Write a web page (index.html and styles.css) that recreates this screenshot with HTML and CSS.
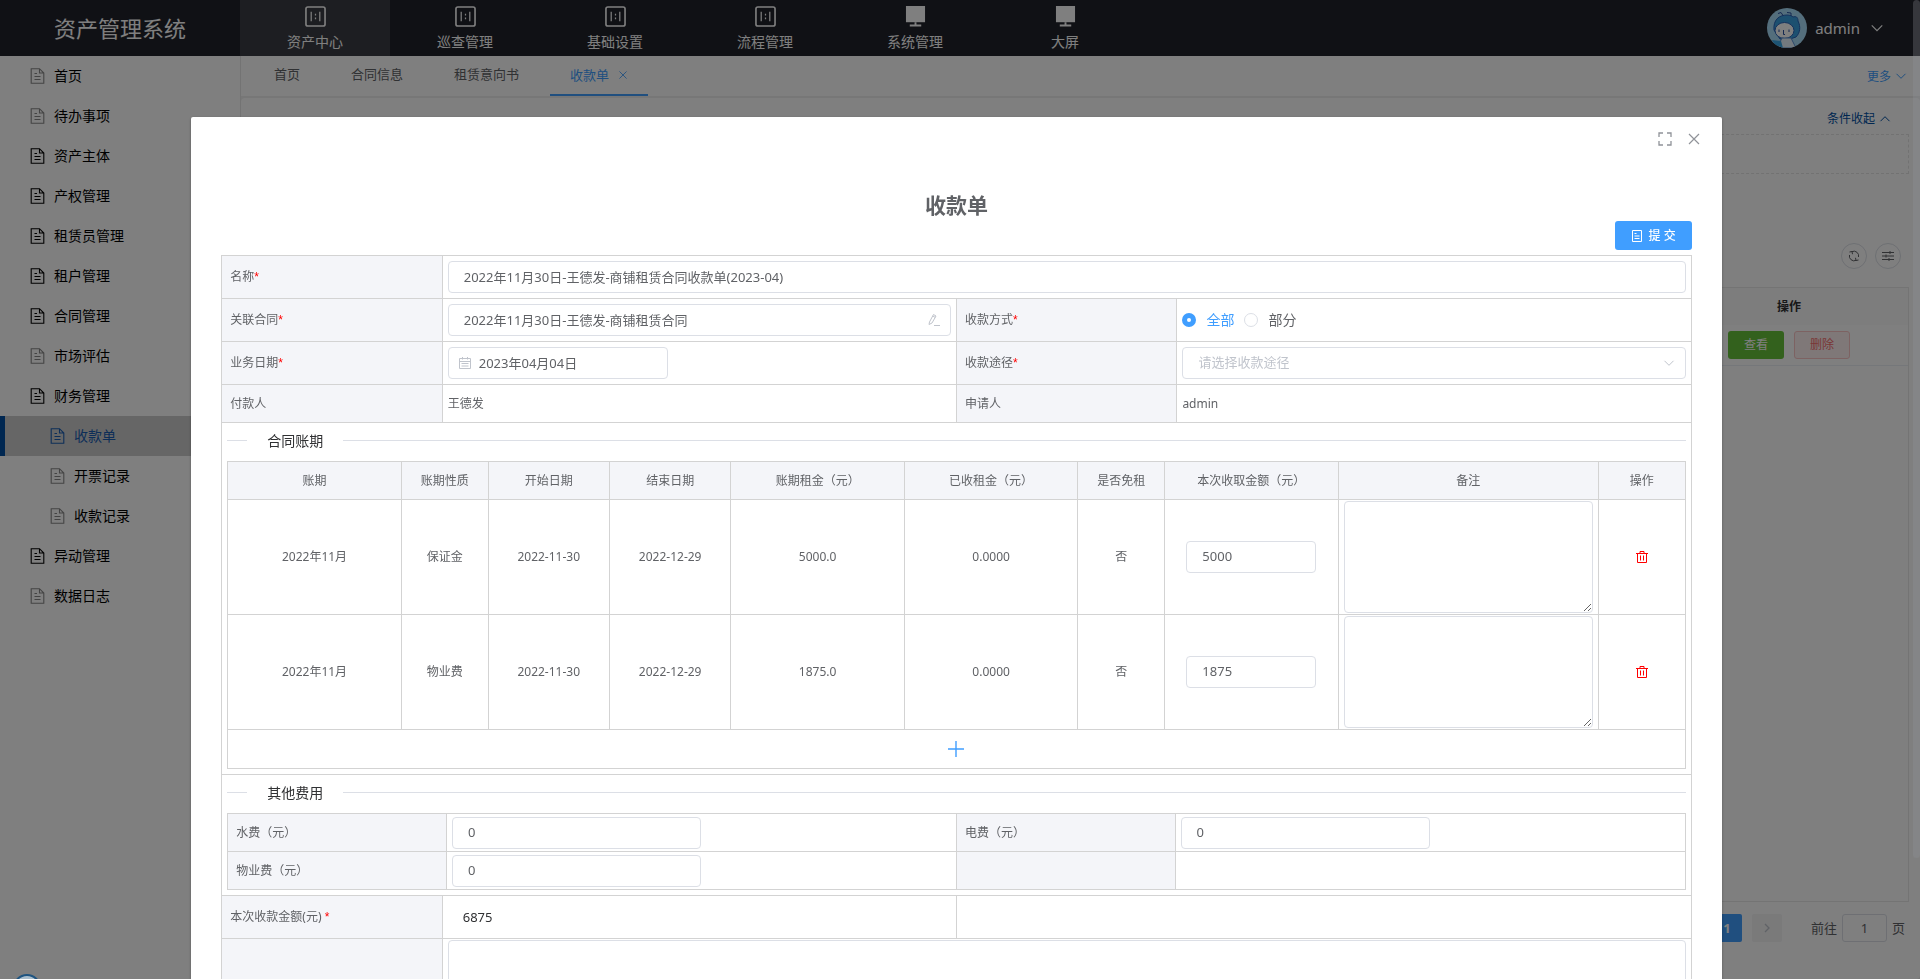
FILE: index.html
```html
<!DOCTYPE html>
<html lang="zh-CN">
<head>
<meta charset="utf-8">
<title>资产管理系统</title>
<link rel="stylesheet" href="styles.css">
</head>
<body>
<svg class="sprite" aria-hidden="true">
  <symbol id="i-doc" viewBox="0 0 14 16"><path d="M.700 .700h8.300l4.300 4.300v10.300H.700zM9 .700v4.300h4.300M4 5.500h2.500M4 8.500h6M4 11.500h6" fill="none" stroke="currentColor" stroke-width="1.100"/></symbol>
  <symbol id="i-ratio" viewBox="0 0 22 22"><rect x="1" y="1" width="20" height="20" rx="2" fill="none" stroke="currentColor" stroke-width="1.700"/><path d="M6.500 6v10M15.500 6v10M11 8v2M11 12v2" fill="none" stroke="currentColor" stroke-width="1.300"/></symbol>
  <symbol id="i-screen" viewBox="0 0 22 22"><path d="M1 0h20v17H1z" fill="currentColor"/><path d="M11 17v3M5 20.500h12" stroke="currentColor" stroke-width="2" fill="none"/></symbol>
  <symbol id="i-down" viewBox="0 0 12 12"><path d="M1.500 3.800l4.500 4.500 4.500-4.500" fill="none" stroke="currentColor"/></symbol>
  <symbol id="i-up" viewBox="0 0 12 12"><path d="M1.500 8.200l4.500-4.500 4.500 4.500" fill="none" stroke="currentColor"/></symbol>
  <symbol id="i-right" viewBox="0 0 12 12"><path d="M4 2l4 4-4 4" fill="none" stroke="currentColor" stroke-width="1.300"/></symbol>
  <symbol id="i-close" viewBox="0 0 14 14"><path d="M2 2l10 10M12 2L2 12" fill="none" stroke="currentColor" stroke-width="1.200"/></symbol>
  <symbol id="i-full" viewBox="0 0 14 14"><path d="M1 5V1h4M9 1h4v4M13 9v4H9M5 13H1V9" fill="none" stroke="currentColor" stroke-width="1.300"/></symbol>
  <symbol id="i-form" viewBox="0 0 12 12"><path d="M1.500 .500h9v11h-9zM3.500 3.500h2M3.500 6h5M3.500 8.500h5" fill="none" stroke="currentColor"/></symbol>
  <symbol id="i-trash" viewBox="0 0 12 12"><path d="M0 2.500h12M4 2.500v-2h4v2M1.500 2.500v9h9v-9M4.500 4.500v5M7.500 4.500v5" fill="none" stroke="currentColor"/></symbol>
  <symbol id="i-plus" viewBox="0 0 16 16"><path d="M8 0v16M0 8h16" fill="none" stroke="currentColor" stroke-width="1.400"/></symbol>
  <symbol id="i-cal" viewBox="0 0 12 12"><path d="M.500 1.500h11v10H.500zM.500 4.500h11M3.500 0v2.500M8.500 0v2.500M2.500 6.500h7M2.500 9h7" fill="none" stroke="currentColor"/></symbol>
  <symbol id="i-edit" viewBox="0 0 12 12"><path d="M1.500 8l4-7.500 2.500 1.500-4 7-3 1.500zM4.800 2l2.400 1.400M6 11.500h6" fill="none" stroke="currentColor"/></symbol>
  <symbol id="i-refresh" viewBox="0 0 12 12"><path d="M4 1.600a4.700 4.700 0 0 1 6.500 5.400M8 10.400A4.700 4.700 0 0 1 1.500 5M4.500 4.200l-.500-2.700-2.500.500M7.500 7.800l.500 2.700 2.500-.500" fill="none" stroke="currentColor"/></symbol>
  <symbol id="i-sliders" viewBox="0 0 12 12"><path d="M0 2.500h12M0 6h12M0 9.500h12M8 1v3M4 4.500v3M7 8v3" fill="none" stroke="currentColor"/></symbol>
</svg>

<div class="app">
  <header class="topbar">
    <div class="brand">资产管理系统</div>
    <nav class="topnav">
      <a class="topnav-item active" href="#"><svg><use href="#i-ratio"/></svg>资产中心</a>
      <a class="topnav-item" href="#"><svg><use href="#i-ratio"/></svg>巡查管理</a>
      <a class="topnav-item" href="#"><svg><use href="#i-ratio"/></svg>基础设置</a>
      <a class="topnav-item" href="#"><svg><use href="#i-ratio"/></svg>流程管理</a>
      <a class="topnav-item" href="#"><svg><use href="#i-screen"/></svg>系统管理</a>
      <a class="topnav-item" href="#"><svg><use href="#i-screen"/></svg>大屏</a>
    </nav>
    <button class="user" type="button">
      <svg class="avatar" viewBox="0 0 40 40"><defs><clipPath id="av"><circle cx="20" cy="20" r="20"/></clipPath></defs><g clip-path="url(#av)"><path fill="#a9dcf8" d="M0 0h40v40H0z"/><path d="M7 22C6 12 12 7 20 7c3 0 5 1 6 2 3-1 5 0 5 4 3 6 2 12-2 16l-6 2H13z" fill="#3aa0e0" stroke="#2a62b8"/><ellipse cx="17.500" cy="22.500" rx="9.500" ry="8" fill="#fff" stroke="#2a62b8"/><path d="M12 21.500v2.500M22 21.500v2.500M16.500 22v4.500h1.500M11 5.500l3-1 2 3M20 4.500l4 .500v3" fill="none" stroke="#2a50a0"/><path d="M10 40l5-10h9l5 10z" fill="#e8f5ff" stroke="#5a8ed0"/><path d="M5 32l9 1 2 7H9z" fill="#3aa8e8"/></g></svg>
      <span>admin</span>
      <svg class="ic14"><use href="#i-down"/></svg>
    </button>
  </header>

  <div class="shell">
    <aside class="sidebar">
      <a class="menu dim" href="#"><svg><use href="#i-doc"/></svg>首页</a>
      <a class="menu dim" href="#"><svg><use href="#i-doc"/></svg>待办事项</a>
      <a class="menu" href="#"><svg><use href="#i-doc"/></svg>资产主体</a>
      <a class="menu" href="#"><svg><use href="#i-doc"/></svg>产权管理</a>
      <a class="menu" href="#"><svg><use href="#i-doc"/></svg>租赁员管理</a>
      <a class="menu" href="#"><svg><use href="#i-doc"/></svg>租户管理</a>
      <a class="menu" href="#"><svg><use href="#i-doc"/></svg>合同管理</a>
      <a class="menu dim" href="#"><svg><use href="#i-doc"/></svg>市场评估</a>
      <a class="menu" href="#"><svg><use href="#i-doc"/></svg>财务管理</a>
      <a class="menu sub active" href="#"><svg><use href="#i-doc"/></svg>收款单</a>
      <a class="menu sub dim" href="#"><svg><use href="#i-doc"/></svg>开票记录</a>
      <a class="menu sub dim" href="#"><svg><use href="#i-doc"/></svg>收款记录</a>
      <a class="menu" href="#"><svg><use href="#i-doc"/></svg>异动管理</a>
      <a class="menu dim" href="#"><svg><use href="#i-doc"/></svg>数据日志</a>
    </aside>
    <main class="page">
      <div class="tabs">
        <a class="tab" href="#">首页</a>
        <a class="tab" href="#">合同信息</a>
        <a class="tab" href="#">租赁意向书</a>
        <a class="tab active" href="#">收款单<svg><use href="#i-close"/></svg></a>
        <button class="more" type="button">更多<svg><use href="#i-down"/></svg></button>
      </div>
      <section class="card">
        <div class="fold"><button type="button">条件收起<svg><use href="#i-up"/></svg></button></div>
        <div class="filters"></div>
        <div class="tools">
          <button type="button" aria-label="刷新"><svg><use href="#i-refresh"/></svg></button>
          <button type="button" aria-label="列设置"><svg><use href="#i-sliders"/></svg></button>
        </div>
        <div class="listing">
          <table class="list">
            <thead><tr><th></th><th class="ops">操作</th></tr></thead>
            <tbody><tr><td></td><td class="ops"><div class="op-row"><button class="btn-view" type="button">查看</button><button class="btn-del" type="button">删除</button></div></td></tr></tbody>
          </table>
        </div>
        <div class="pager">
          <button class="pg on" type="button">1</button>
          <button class="pg" type="button" aria-label="下一页"><svg><use href="#i-right"/></svg></button>
          <label class="jump">前往<input type="text" value="1">页</label>
        </div>
      </section>
    </main>
  </div>
</div>

<div class="overlay">
  <div class="dialog" role="dialog" aria-label="收款单">
    <div class="dialog-head">
      <button type="button" aria-label="全屏"><svg><use href="#i-full"/></svg></button>
      <button type="button" aria-label="关闭"><svg><use href="#i-close"/></svg></button>
    </div>
    <form class="dialog-body">
      <h2>收款单</h2>
      <div class="actions"><button class="submit" type="button"><svg><use href="#i-form"/></svg>提 交</button></div>
      <table class="grid form">
        <colgroup><col class="w15"><col class="w35"><col class="w15"><col class="w35"></colgroup>
        <tbody>
        <tr class="tall"><th><label for="f-name">名称<i>*</i></label></th><td colspan="3"><input id="f-name" class="box" type="text" value="2022年11月30日-王德发-商铺租赁合同收款单(2023-04)"></td></tr>
        <tr class="tall"><th><label for="f-contract">关联合同<i>*</i></label></th><td><div class="field"><input id="f-contract" class="box" type="text" value="2022年11月30日-王德发-商铺租赁合同"><svg class="tail"><use href="#i-edit"/></svg></div></td>
          <th>收款方式<i>*</i></th><td><div class="radios"><label class="on"><input type="radio" name="way" checked>全部</label><label><input type="radio" name="way">部分</label></div></td></tr>
        <tr class="tall"><th><label for="f-date">业务日期<i>*</i></label></th><td><div class="field date"><svg class="lead"><use href="#i-cal"/></svg><input id="f-date" class="box" type="text" value="2023年04月04日"></div></td>
          <th><label for="f-path">收款途径<i>*</i></label></th><td><div class="field"><select id="f-path" class="box"><option>请选择收款途径</option></select><svg class="tail"><use href="#i-down"/></svg></div></td></tr>
        <tr><th>付款人</th><td>王德发</td><th>申请人</th><td>admin</td></tr>
        <tr><td class="section" colspan="4">
          <div class="divider"><span>合同账期</span></div>
          <table class="grid bills">
            <colgroup><col class="c-wide"><col class="c-narrow"><col class="c-date"><col class="c-date"><col class="c-wide"><col class="c-wide"><col class="c-narrow"><col class="c-wide"><col class="c-note"><col class="c-narrow"></colgroup>
            <thead><tr><th>账期</th><th>账期性质</th><th>开始日期</th><th>结束日期</th><th>账期租金（元）</th><th>已收租金（元）</th><th>是否免租</th><th>本次收取金额（元）</th><th>备注</th><th>操作</th></tr></thead>
            <tbody>
            <tr class="bill"><td>2022年11月</td><td>保证金</td><td>2022-11-30</td><td>2022-12-29</td><td>5000.0</td><td>0.0000</td><td>否</td><td><input class="box amount" type="text" value="5000" aria-label="本次收取金额"></td><td class="note"><textarea aria-label="备注"></textarea></td><td><button class="del" type="button" aria-label="删除"><svg><use href="#i-trash"/></svg></button></td></tr>
            <tr class="bill"><td>2022年11月</td><td>物业费</td><td>2022-11-30</td><td>2022-12-29</td><td>1875.0</td><td>0.0000</td><td>否</td><td><input class="box amount" type="text" value="1875" aria-label="本次收取金额"></td><td class="note"><textarea aria-label="备注"></textarea></td><td><button class="del" type="button" aria-label="删除"><svg><use href="#i-trash"/></svg></button></td></tr>
            <tr class="add"><td colspan="10"><button type="button" aria-label="添加"><svg><use href="#i-plus"/></svg></button></td></tr>
            </tbody>
          </table>
        </td></tr>
        <tr><td class="section" colspan="4">
          <div class="divider"><span>其他费用</span></div>
          <table class="grid fees">
            <colgroup><col class="w15"><col class="w35"><col class="w15"><col class="w35"></colgroup>
            <tbody>
            <tr><th><label for="f-water">水费（元）</label></th><td><input id="f-water" class="box half" type="text" value="0"></td><th><label for="f-power">电费（元）</label></th><td><input id="f-power" class="box half" type="text" value="0"></td></tr>
            <tr><th><label for="f-prop">物业费（元）</label></th><td><input id="f-prop" class="box half" type="text" value="0"></td><th></th><td></td></tr>
            </tbody>
          </table>
        </td></tr>
        <tr class="tall"><th><label for="f-total">本次收款金额(元) <i>*</i></label></th><td><input id="f-total" class="box plain" type="text" value="6875" readonly></td><td colspan="2"></td></tr>
        <tr><th></th><td class="memo" colspan="3"><textarea aria-label="备注"></textarea></td></tr>
        </tbody>
      </table>
    </form>
  </div>
  <div class="scroll-thumb"></div>
</div>
<div class="bubble"></div>
</body>
</html>
```
FILE: styles.css
```css
* { box-sizing: border-box; }
html, body { height: 100%; }
body {
  margin: 0;
  overflow: hidden;
  font-family: "Noto Sans", "Noto Sans CJK SC", sans-serif;
  font-size: 12px;
  line-height: 20px;
  color: #606266;
}
button, input, select, textarea { font: inherit; color: inherit; margin: 0; }
button { border: 0; padding: 0; background: none; display: inline-flex; align-items: center; justify-content: center; }
a { color: inherit; text-decoration: none; }
svg { display: block; flex: none; width: 12px; height: 12px; }
.sprite { position: absolute; width: 0; height: 0; }

.app { height: 100vh; display: flex; flex-direction: column; }
.topbar { height: 56px; flex: none; display: flex; background: #20222a; color: #fff; }
.brand { width: 240px; padding-left: 54px; font-size: 22px; line-height: 56px; }
.topnav { display: flex; flex: 1; }
.topnav-item { width: 150px; display: flex; flex-direction: column; align-items: center; gap: 5px; padding-top: 6px; font-size: 14px; }
.topnav-item svg { width: 21px; height: 21px; }
.topnav-item.active { background: #3b3d44; }
.user { gap: 8px; padding-right: 36px; font-size: 15px; }
.avatar { width: 40px; height: 40px; }
.user .ic14 { width: 14px; height: 14px; margin-left: 2px; }

.shell { flex: 1; display: flex; min-height: 0; }
.sidebar { width: 241px; flex: none; border-right: 1px solid #e6e6e6; color: #000; font-size: 14px; }
.menu { display: flex; align-items: center; gap: 9px; height: 40px; padding-left: 30px; }
.menu svg { width: 15px; height: 16px; }
.menu.dim svg { color: #888; }
.menu.sub { padding-left: 50px; }
.menu.active { background: #cdcdcd; color: #1a5cb0; border-left: 5px solid #004ea2; padding-left: 45px; }

.page { flex: 1; display: flex; flex-direction: column; background: #eee; }
.tabs { height: 40px; margin-bottom: 2px; display: flex; gap: 11px; padding: 0 13px; background: #fff; font-size: 13px; line-height: 37px; }
.tab { padding: 0 20px; display: flex; }
.tab.active { color: #409eff; border-bottom: 2px solid #409eff; gap: 9px; align-items: center; }
.tab.active svg { width: 10px; height: 10px; }
.more { margin-left: auto; gap: 4px; color: #409eff; font-size: 12px; }
.card { flex: 1; display: flex; flex-direction: column; background: #fff; border-radius: 4px; padding: 0 11px 37px; }
.fold { display: flex; justify-content: flex-end; padding: 11px 18px 5px; color: #004ea2; }
.fold button { gap: 4px; }
.filters { height: 40px; border: 1px dashed #e4e4e4; }
.tools { display: flex; justify-content: flex-end; gap: 8px; padding: 69px 8px 18px; }
.tools button { width: 26px; height: 26px; border: 1px solid #dcdfe6; border-radius: 50%; }
.listing { flex: 1; border: 1px solid #e8e8e8; }
.list { width: 100%; border-collapse: collapse; }
.list th { height: 37px; background: #fafafa; color: #303133; }
.list td { height: 40px; padding: 0; border-bottom: 1px solid #ebeef5; }
.list .ops { width: 238px; }
.op-row { display: flex; justify-content: center; gap: 10px; }
.btn-view, .btn-del { width: 56px; height: 28px; border-radius: 3px; }
.btn-view { background: #67c23a; color: #fff; }
.btn-del { background: #fef0f0; border: 1px solid #fbc4c4; color: #f56c6c; }
.pager { display: flex; justify-content: flex-end; gap: 10px; padding: 12px 4px 0; font-size: 13px; line-height: 28px; }
.pg { width: 30px; height: 28px; border-radius: 2px; background: #f4f4f5; color: #c0c4cc; }
.pg.on { background: #409eff; color: #fff; font-weight: 700; }
.jump { display: flex; gap: 5px; margin-left: 19px; }
.jump input { width: 45px; height: 28px; border: 1px solid #dcdfe6; border-radius: 3px; text-align: center; padding: 0; }

.overlay { position: fixed; inset: 0; padding-right: 7px; overflow: hidden; background: rgba(0, 0, 0, .5); }
.scroll-thumb { position: absolute; top: 0; right: 0; width: 7px; height: 858px; border-radius: 4px; background: rgba(144, 147, 153, .3); }
.bubble { position: fixed; left: 13px; bottom: -23px; width: 28px; height: 28px; border: 2px solid #1f5480; border-radius: 50%; background: #a8bccb; }

.dialog { width: 80%; margin: 12vh auto 50px; background: #fff; border-radius: 2px; box-shadow: 0 1px 3px rgba(0, 0, 0, .3); }
.dialog-head { display: flex; justify-content: flex-end; gap: 15px; padding: 15px 21px; color: #909399; }
.dialog-head svg { width: 14px; height: 14px; }
.dialog-body { padding: 30px; }
.dialog-body h2 { margin: 0 0 2px; text-align: center; font-size: 21px; line-height: 28px; }
.actions { display: flex; justify-content: flex-end; margin-bottom: 5px; }
.submit { height: 29px; padding: 0 16px; gap: 6px; border-radius: 3px; background: #409eff; color: #fff; font-weight: 500; }

.grid { width: 100%; border-collapse: collapse; table-layout: fixed; }
.grid th, .grid td { border: 1px solid #d3d3d3; padding: 0 5px; font-weight: 400; text-align: left; }
.grid th { background: #f4f5f9; padding: 0 8px; }
.grid tr { height: 38px; }
.grid tr.tall { height: 43px; }
.grid i { color: #f00; font-style: normal; font-family: "Liberation Sans", sans-serif; }
.w15 { width: 15%; }
.w35 { width: 35%; }
.c-narrow { width: 50px; }
.c-date { width: 70px; }
.c-wide { width: 100px; }
.c-note { width: 150px; }

.box { display: block; width: 100%; height: 32px; padding: 0 15px 2px; border: 1px solid #dcdfe6; border-radius: 4px; background: #fff; font-size: 13px; }
.box.half { width: 50%; }
.box.amount { width: 80%; margin: 0 auto; }
.box.plain { border-color: transparent; color: #303133; padding: 0 14px; }
select.box { appearance: none; color: #c0c4cc; }
.field { position: relative; }
.field.date { width: 220px; }
.field.date .box { padding-left: 30px; }
.field svg { position: absolute; top: 10px; color: #c0c4cc; }
.field .tail { right: 11px; }
.field .lead { left: 11px; }
.radios { display: flex; gap: 10px; font-size: 14px; }
.radios label { display: flex; align-items: center; gap: 10px; }
.radios .on { color: #409eff; }
.radios input { appearance: none; width: 14px; height: 14px; border: 1px solid #dcdfe6; border-radius: 50%; }
.radios input:checked { border: 5px solid #409eff; }

.grid .section { padding: 0 5px 5px; }
.divider { display: flex; align-items: center; height: 38px; padding-bottom: 3px; font-size: 14px; color: #303133; }
.divider::before, .divider::after { content: ""; height: 1px; background: #dcdfe6; }
.divider::before { width: 20px; }
.divider::after { flex: 1; }
.divider span { padding: 0 20px; }
.bills th, .bills td { text-align: center; }
.bills th { padding: 0; }
.bills tr.bill { height: 115px; }
.bills tr.add { height: 39px; }
.bills .note { padding: 1px 5px; }
textarea { display: block; width: 100%; height: 112px; border: 1px solid #dcdfe6; border-radius: 4px; resize: vertical; }
.memo textarea { height: 120px; }
.grid .memo { padding: 1px 5px; }
.del { display: flex; margin: 0 auto; color: #f00; }
.add button { display: flex; margin: 0 auto; color: #409eff; }
.add svg { width: 16px; height: 16px; }
```
